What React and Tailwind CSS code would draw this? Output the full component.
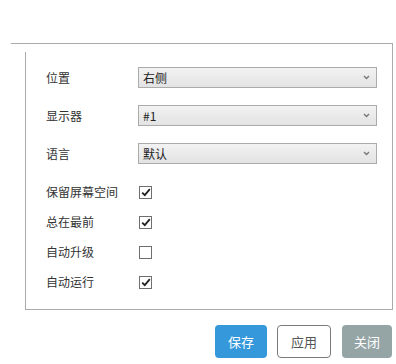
import { useState } from 'react';

const XIALA = [
  { biaoti: '位置', zhi: '右侧' },
  { biaoti: '显示器', zhi: '#1' },
  { biaoti: '语言', zhi: '默认' },
];

const FUXUAN = [
  { biaoti: '保留屏幕空间', xuan: true },
  { biaoti: '总在最前', xuan: true },
  { biaoti: '自动升级', xuan: false },
  { biaoti: '自动运行', xuan: true },
];

function Xiala({ zhi }) {
  return (
    <div className="w-[239px] h-[21px] flex items-center justify-between border border-[#ababab] bg-gradient-to-b from-[#f2f2f2] to-[#e3e3e3] pl-[4px] pr-[6px] text-[12px] text-[#222]">
      <span>{zhi}</span>
      <svg width="7" height="5" viewBox="0 0 7 5">
        <path d="M1 1 L3.5 3.5 L6 1" fill="none" stroke="#777" strokeWidth="1.4" />
      </svg>
    </div>
  );
}

function Fuxuan({ xuan, onClick }) {
  return (
    <div
      onClick={onClick}
      className="w-[13px] h-[13px] border border-[#6f6f6f] bg-white flex items-center justify-center"
    >
      {xuan && (
        <svg width="10" height="9" viewBox="0 0 10 9">
          <path d="M1.2 4.6 L3.8 7.2 L8.8 1.2" fill="none" stroke="#222" strokeWidth="1.8" />
        </svg>
      )}
    </div>
  );
}

export default function App() {
  const [zhuangtai, setZhuangtai] = useState(FUXUAN.map(f => f.xuan));

  return (
    <div className="w-[396px] h-[364px] bg-white font-['Noto_Sans_CJK_SC','Liberation_Sans',sans-serif]">
      <div className="pt-[43px] pl-[11px]">
        <div className="w-[382px] border-t border-r border-[#ababab]">
          <div className="ml-[14px] mt-[8px] h-[258px] border-l border-b border-[#ababab] pl-[20px] pt-[15px]">
            {XIALA.map((x) => (
              <div key={x.biaoti} className="flex items-center h-[21px] mb-[17px]">
                <span className="w-[92px] text-[12px] text-[#333]">{x.biaoti}</span>
                <Xiala zhi={x.zhi} />
              </div>
            ))}
            <div className="mt-[-4px]">
              {FUXUAN.map((f, i) => (
                <div key={f.biaoti} className="flex items-center h-[30px]">
                  <span className="w-[93px] text-[12px] text-[#333]">{f.biaoti}</span>
                  <Fuxuan
                    xuan={zhuangtai[i]}
                    onClick={() => setZhuangtai(prev => prev.map((v, j) => (j === i ? !v : v)))}
                  />
                </div>
              ))}
            </div>
          </div>
        </div>
      </div>

      {/* 按钮 */}
      <div className="flex justify-end pr-[4px] mt-[15px]">
        <button className="w-[52px] h-[33px] rounded-[4px] bg-[#3498db] text-white text-[13px]">保存</button>
        <button className="ml-[10px] w-[54px] h-[33px] rounded-[4px] border border-[#7a7a7a] bg-white text-[#555] text-[13px]">应用</button>
        <button className="ml-[11px] w-[50px] h-[33px] rounded-[4px] bg-[#95a5a6] text-white text-[13px]">关闭</button>
      </div>
    </div>
  );
}
